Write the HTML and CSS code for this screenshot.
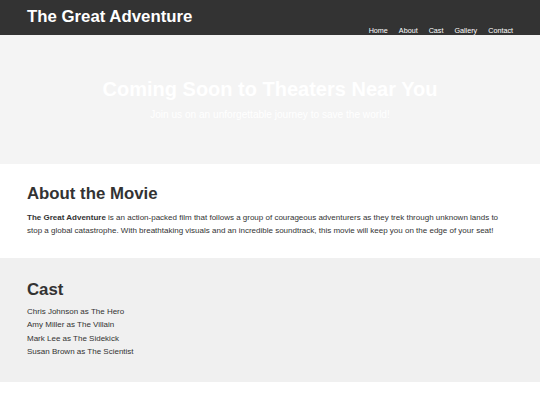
FILE: index.html
```html
<!DOCTYPE html>
<html lang="en">
<head>
<meta charset="utf-8">
<title>The Great Adventure</title>
<link rel="stylesheet" href="styles.css">
</head>
<body>
<header class="site-header">
  <h1 class="site-title">The Great Adventure</h1>
  <nav class="site-nav">
    <a href="#">Home</a>
    <a href="#about">About</a>
    <a href="#cast">Cast</a>
    <a href="#">Gallery</a>
    <a href="#">Contact</a>
  </nav>
</header>
<section class="hero">
  <h2 class="hero-title">Coming Soon to Theaters Near You</h2>
  <p class="hero-sub">Join us on an unforgettable journey to save the world!</p>
</section>
<section class="about" id="about">
  <h2 class="section-title">About the Movie</h2>
  <p class="about-text"><strong>The Great Adventure</strong> is an action-packed film that follows a group of courageous adventurers as they trek through unknown lands to stop a global catastrophe. With breathtaking visuals and an incredible soundtrack, this movie will keep you on the edge of your seat!</p>
</section>
<section class="cast" id="cast">
  <h2 class="section-title">Cast</h2>
  <ul class="cast-list">
    <li>Chris Johnson as The Hero</li>
    <li>Amy Miller as The Villain</li>
    <li>Mark Lee as The Sidekick</li>
    <li>Susan Brown as The Scientist</li>
  </ul>
</section>
</body>
</html>
```
FILE: styles.css
```css
* { box-sizing: border-box; }
html, body { margin: 0; padding: 0; }
body {
  font-family: "Liberation Sans", Arial, sans-serif;
  color: #333;
  background: #fff;
}
.site-header {
  background: #333;
  height: 35px;
  padding: 0 27px;
  display: flex;
  justify-content: space-between;
}
.site-title {
  margin: 7px 0 0;
  font-size: 16.8px;
  line-height: 19.3px;
  font-weight: bold;
  color: #fff;
}
.site-nav {
  align-self: flex-end;
  display: flex;
  gap: 11px;
  font-size: 7.2px;
  line-height: 8px;
}
.site-nav a {
  color: #fff;
  text-decoration: none;
}
.hero {
  background: #f4f4f4;
  height: 128.5px;
  padding-top: 43px;
  text-align: center;
}
.hero-title {
  margin: 0;
  font-size: 20px;
  line-height: 23px;
  font-weight: bold;
  color: #fff;
}
.hero-sub {
  margin: 8px 0 0;
  font-size: 10.1px;
  line-height: 11.5px;
  color: #fff;
}
.about {
  padding: 20.6px 27px 20.5px;
  background: #fff;
}
.section-title {
  margin: 0;
  font-size: 16.8px;
  line-height: 19.3px;
  font-weight: bold;
  color: #333;
}
.about-text {
  margin: 7.2px 0 0;
  font-size: 8px;
  line-height: 13.6px;
}
.cast {
  background: #f0f0f0;
  padding: 21.5px 27px 23.7px;
}
.cast-list {
  list-style: none;
  margin: 5.9px 0 0;
  padding: 0;
  font-size: 8px;
  line-height: 13.33px;
}
```
